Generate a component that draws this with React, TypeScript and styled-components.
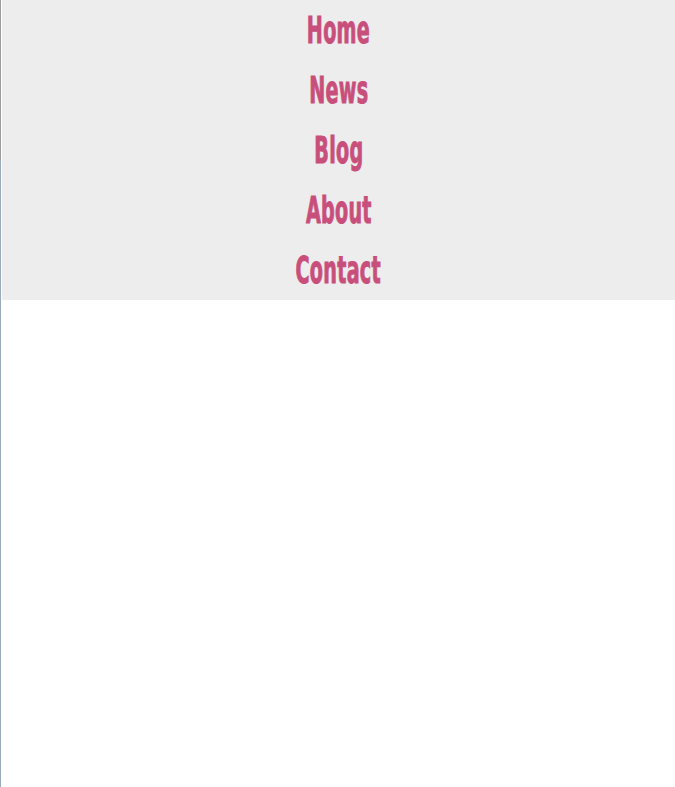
import React from "react";
import styled, { createGlobalStyle } from "styled-components";

const Global = createGlobalStyle`
  html, body { margin: 0; padding: 0; background: #ffffff; }
  body { font-family: "Liberation Sans", Arial, sans-serif; }
`;

const Frame = styled.div`
  min-height: 787px;
  padding-left: 2px;
  box-sizing: border-box;
  background:
    linear-gradient(to bottom, #9a9ca0 0, #9a9ca0 160px, #9aa9c2 160px, #9aa9c2 100%) left top / 1px 100% no-repeat,
    #ffffff;
`;

const Nav = styled.nav`
  background: #ededed;
  display: flex;
  flex-direction: column;
`;

const NavLink = styled.a`
  height: 60px;
  display: flex;
  align-items: center;
  justify-content: center;
  text-decoration: none;
  color: #c84f7b;
  font-family: "DejaVu Sans Condensed", "DejaVu Sans", sans-serif;
  font-weight: 700;
  font-size: 38px;
  line-height: 1;
  cursor: pointer;
`;

const Label = styled.span`
  display: inline-block;
  transform: scaleX(0.56);
  -webkit-text-stroke: 1px currentColor;
  letter-spacing: 0.5px;
`;

const items = ["Home", "News", "Blog", "About", "Contact"];

export default function App() {
  return (
    <>
      <Global />
      <Frame>
        <Nav>
          {items.map((t) => (
            <NavLink key={t} href="#">
              <Label>{t}</Label>
            </NavLink>
          ))}
        </Nav>
      </Frame>
    </>
  );
}
